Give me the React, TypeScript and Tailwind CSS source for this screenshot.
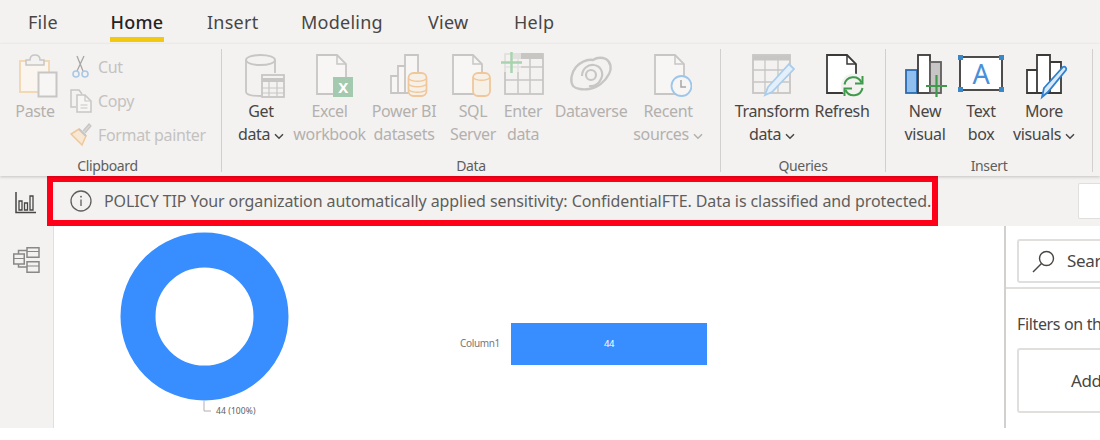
import type { ReactNode } from 'react'

const tabs = [
  { label: 'File', w: 'w-[110px]', pl: 'pl-[28px]' },
  { label: 'Home', w: 'w-[97px]', pl: 'pl-0' },
  { label: 'Insert', w: 'w-[94px]', pl: 'pl-0' },
  { label: 'Modeling', w: 'w-[127px]', pl: 'pl-0' },
  { label: 'View', w: 'w-[86px]', pl: 'pl-0' },
  { label: 'Help', w: 'w-[60px]', pl: 'pl-0' },
]

const Icon = ({ children }: { children: ReactNode }) => (
  <svg width="48" height="50" viewBox="0 0 48 50" fill="none" className="shrink-0">
    {children}
  </svg>
)

const Caret = () => (
  <svg width="10" height="7" viewBox="0 0 10 7" fill="none" className="ml-[4px] mt-[3px]">
    <path d="M1 1.2 5 5.2 9 1.2" stroke="currentColor" strokeWidth="1.5" />
  </svg>
)

function RibbonButton({ w, icon, lines, off, caret }: { w: string; icon: ReactNode; lines: string[]; off?: boolean; caret?: boolean }) {
  return (
    <div className={`${w} flex flex-col items-center shrink-0 ${off ? 'text-[#b3b0ad]' : 'text-[#484644]'}`}>
      {icon}
      {lines.map((line, i) => (
        <div key={i} className="h-[23px] leading-[23px] whitespace-nowrap flex items-center">
          {line}
          {caret && i === lines.length - 1 && <Caret />}
        </div>
      ))}
    </div>
  )
}

function Group({ w, label, labelPad, children }: { w: string; label: string; labelPad?: string; children: ReactNode }) {
  return (
    <div className={`${w} shrink-0 mt-[5px] h-[123px] border-r border-[#d2d0ce] flex flex-col pt-px`}>
      <div className="flex h-[108px] shrink-0">{children}</div>
      <div className={`${labelPad ?? ''} shrink-0 text-center text-[14px] leading-[16px] text-[#605e5c] whitespace-nowrap`}>{label}</div>
    </div>
  )
}

function SmallAction({ icon, label }: { icon: ReactNode; label: string }) {
  return (
    <div className="flex items-center h-[34px] text-[#c4c2c0]">
      <div className="w-[28px] shrink-0">{icon}</div>
      <span className="whitespace-nowrap">{label}</span>
    </div>
  )
}

const g = '#c8c6c4'

export default function App() {
  return (
    <div className="w-[1100px] h-[428px] overflow-hidden bg-[#f3f2f1] font-['Noto_Sans',sans-serif] text-[16px] tracking-[-0.35px] flex flex-col">
      {/* Tabs */}
      <div className="flex h-[44px] shrink-0 text-[18px] tracking-[0.25px] text-[#484644]">
        {tabs.map(t => (
          <div key={t.label} className={`${t.w} ${t.pl} h-full shrink-0 flex items-center`}>
            {t.label === 'Home' ? (
              <span className="relative h-full flex items-center text-[#252423] w-[54px] justify-center font-medium">
                Home
                <span className="absolute left-0 right-0 bottom-[2px] h-[5px] bg-[#f2c811]" />
              </span>
            ) : (
              t.label
            )}
          </div>
        ))}
      </div>

      {/* Ribbon */}
      <div className="flex h-[132px] shrink-0 shadow-[0_1px_3px_rgba(0,0,0,0.2)] relative">
        <Group w="w-[222px]" label="Clipboard" labelPad="pr-[6px]">
          <RibbonButton
            w="w-[70px]"
            off
            lines={['Paste']}
            icon={
              <Icon>
                <rect x="9" y="11" width="29" height="31" fill="#faf5ee" stroke="#f2d8b5" strokeWidth="2" />
                <path d="M15 15v-5h4c0-3 2-5 5-5s5 2 5 5h4v5z" fill="#f3f2f1" stroke={g} strokeWidth="1.500" />
                <rect x="27.500" y="22.500" width="18" height="24" fill="#f7f6f5" stroke={g} strokeWidth="2" />
              </Icon>
            }
          />
          <div className="flex flex-col">
            <SmallAction
              label="Cut"
              icon={
                <svg width="22" height="24" viewBox="0 0 22 24" fill="none">
                  <path d="M7 1l6 15M14 1 7 16" stroke="#a8a6a4" strokeWidth="1.300" />
                  <circle cx="6" cy="19" r="3" stroke="#a9c8e6" strokeWidth="1.600" />
                  <circle cx="15" cy="19" r="3" stroke="#a9c8e6" strokeWidth="1.600" />
                </svg>
              }
            />
            <SmallAction
              label="Copy"
              icon={
                <svg width="23" height="24" viewBox="0 0 23 24" fill="none" stroke={g} strokeWidth="1.500">
                  <path d="M6 18H1V1h8l3 4" />
                  <path d="M7 6h8l6 6v11H7z" fill="#f7f6f5" />
                  <path d="M15 6v6h6M10.500 16h7M10.500 19h7" strokeWidth="1.200" />
                </svg>
              }
            />
            <SmallAction
              label="Format painter"
              icon={
                <svg width="22" height="24" viewBox="0 0 22 24" fill="none">
                  <path d="M13 8l6-7 2 2-6 7" fill="#d9d7d5" stroke={g} strokeWidth="1.200" />
                  <path d="M9 6l7 7-4 9L1 11z" fill="#f8e7d2" stroke="#efc79a" strokeWidth="1.500" />
                  <path d="M9 6l7 7" stroke={g} strokeWidth="2" />
                </svg>
              }
            />
          </div>
        </Group>

        <Group w="w-[499px]" label="Data">
          <div className="w-[4px] shrink-0" />
          <RibbonButton
            w="w-[70px]"
            caret
            lines={['Get', 'data']}
            icon={
              <Icon>
                <ellipse cx="23.500" cy="10" rx="14.500" ry="5" stroke={g} strokeWidth="1.800" />
                <path d="M9 10v32c0 2 4 4 15 4" stroke={g} strokeWidth="1.800" />
                <path d="M38 10v13" stroke={g} strokeWidth="1.800" />
                <rect x="25" y="25" width="22" height="22" fill="#f3f2f1" stroke={g} strokeWidth="1.800" />
                <path d="M25 30h22" stroke={g} strokeWidth="4" />
                <path d="M25 38h22M25 43h22M32 30v17M40 30v17" stroke={g} strokeWidth="1.200" />
              </Icon>
            }
          />
          <RibbonButton
            w="w-[67px]"
            off
            lines={['Excel', 'workbook']}
            icon={
              <Icon>
                <path d="M11 5h20l9 9v30H11z" fill="#f7f6f5" stroke={g} strokeWidth="1.800" />
                <path d="M31 5v9h9" stroke={g} strokeWidth="1.500" />
                <rect x="27" y="27" width="20" height="20" fill="#a3c9ae" />
                <text x="37" y="43" textAnchor="middle" fontSize="15" fontWeight="700" fill="#fff" fontFamily="Noto Sans">X</text>
              </Icon>
            }
          />
          <RibbonButton
            w="w-[82px]"
            off
            lines={['Power BI', 'datasets']}
            icon={
              <Icon>
                <path d="M11 26h7v17h-7zM18 16h7v27h-7zM25 5h13v38H25z" fill="#f7f6f5" stroke={g} strokeWidth="1.800" />
                <rect x="28.500" y="23" width="18" height="23" rx="5" fill="#f7f0e6" stroke="#efc79a" strokeWidth="1.800" />
                <path d="M29 29c3 3 14 3 17 0M29 34.500c3 3 14 3 17 0M29 40c3 3 14 3 17 0" stroke="#efc79a" strokeWidth="1.500" />
              </Icon>
            }
          />
          <RibbonButton
            w="w-[56px]"
            off
            lines={['SQL', 'Server']}
            icon={
              <Icon>
                <path d="M4 5h20l9 9v30H4z" fill="#f7f6f5" stroke={g} strokeWidth="1.800" />
                <path d="M24 5v9h9" stroke={g} strokeWidth="1.500" />
                <rect x="24" y="23" width="17" height="23" rx="5" fill="#f7f0e6" stroke="#efc79a" strokeWidth="1.800" />
                <path d="M24.500 28c3 3 13 3 16 0" stroke="#efc79a" strokeWidth="1.500" />
              </Icon>
            }
          />
          <RibbonButton
            w="w-[44px]"
            off
            lines={['Enter', 'data']}
            icon={
              <Icon>
                <path d="M14 6h30" stroke={g} strokeWidth="6" />
                <rect x="6" y="4" width="38" height="40" stroke={g} strokeWidth="1.800" />
                <path d="M6 17h38M6 30h38M19 4v40M31 4v40" stroke={g} strokeWidth="1.500" />
                <rect x="0" y="0" width="22" height="22" fill="#f3f2f1" opacity="0.6" />
                <path d="M12.500 2v21M2 12.500h21" stroke="#a9d3ae" strokeWidth="2.500" />
              </Icon>
            }
          />
          <RibbonButton
            w="w-[92px]"
            off
            lines={['Dataverse']}
            icon={
              <Icon>
                <path d="M6 36c-3-5-2-13 3-19 5-5 11-8 17-7 3-2 8-3 13-1 5 3 6 10 3 15-4 8-12 14-20 15-6 1-13 0-16-3z" stroke={g} strokeWidth="2.400" />
                <path d="M15 26c0-7 6-12 12-11 7 1 10 8 7 14-2 5-7 8-12 7" stroke={g} strokeWidth="2.200" />
                <circle cx="24" cy="25" r="5" stroke={g} strokeWidth="2.200" />
              </Icon>
            }
          />
          <RibbonButton
            w="w-[62px]"
            off
            caret
            lines={['Recent', 'sources']}
            icon={
              <Icon>
                <path d="M11 5h20l9 9v30H11z" fill="#f7f6f5" stroke={g} strokeWidth="1.800" />
                <path d="M31 5v9h9" stroke={g} strokeWidth="1.500" />
                <circle cx="37.500" cy="36" r="10" fill="#f7f6f5" stroke="#9dc6ea" strokeWidth="1.800" />
                <path d="M37 30v7h5" stroke="#a8a6a4" strokeWidth="1.500" />
              </Icon>
            }
          />
        </Group>

        <Group w="w-[165px]" label="Queries">
          <RibbonButton
            w="w-[102px]"
            caret
            lines={['Transform', 'data']}
            icon={
              <Icon>
                <rect x="5" y="5" width="37" height="38" stroke={g} strokeWidth="1.800" />
                <path d="M5 8h37" stroke={g} strokeWidth="5" />
                <path d="M5 20h37M5 32h37M17 8v35M30 8v35" stroke={g} strokeWidth="1.300" />
                <path d="M20 37 41 14l5 5-22 23-7 3z" fill="#e4eff9" stroke="#a9cdec" strokeWidth="1.800" />
              </Icon>
            }
          />
          <RibbonButton
            w="w-[38px]"
            lines={['Refresh']}
            icon={
              <Icon>
                <path d="M9 5h20l9 9v29H9z" fill="#fff" stroke="#3b3a39" strokeWidth="1.800" />
                <path d="M29 5v9h9" stroke="#3b3a39" strokeWidth="1.500" />
                <circle cx="35.500" cy="36" r="12.500" fill="#f3f2f1" />
                <path d="M26.500 34.500A9 9 0 0 1 43.500 32.500M44.500 38A9 9 0 0 1 27.500 40" stroke="#3f9a4b" strokeWidth="2" />
                <path d="M44.500 26v7.500H37M26.500 46v-7.500H34" stroke="#3f9a4b" strokeWidth="2" />
              </Icon>
            }
          />
        </Group>

        <Group w="w-[207px]" label="Insert">
          <RibbonButton
            w="w-[78px]"
            lines={['New', 'visual']}
            icon={
              <Icon>
                <rect x="5" y="20" width="11" height="23" fill="#8fbfef" stroke="#2b6cb0" strokeWidth="1.800" />
                <rect x="17" y="5" width="12" height="38" fill="#fff" stroke="#3b3a39" strokeWidth="1.800" />
                <rect x="29" y="12" width="11" height="31" fill="#c8c6c4" stroke="#605e5c" strokeWidth="1.800" />
                <path d="M35.500 25v22M25 36h21" stroke="#3f9a4b" strokeWidth="2.200" />
              </Icon>
            }
          />
          <RibbonButton
            w="w-[34px]"
            lines={['Text', 'box']}
            icon={
              <Icon>
                <rect x="3" y="7" width="42" height="33" fill="#fff" stroke="#3b3a39" strokeWidth="1.800" />
                <path d="M1 5h5v5H1zM42 5h5v5h-5zM1 37h5v5H1zM42 37h5v5h-5z" fill="#3a87c8" />
                <text x="24" y="34" textAnchor="middle" fontSize="27" fill="#4a90d9" fontFamily="Noto Sans">A</text>
              </Icon>
            }
          />
          <RibbonButton
            w="w-[92px]"
            caret
            lines={['More', 'visuals']}
            icon={
              <Icon>
                <g transform="translate(6 0)">
                  <path d="M1 20h10v23H1zM11 5h13v38H11zM24 12h11v31H24z" fill="#fff" stroke="#3b3a39" strokeWidth="1.800" />
                  <path d="M18 38 37 17c2-1 4 1 3 3L22 42l-6 5z" fill="#dbeaf8" stroke="#2f80d0" strokeWidth="1.800" />
                </g>
              </Icon>
            }
          />
        </Group>
      </div>

      {/* Policy tip row */}
      <div className="flex h-[50px] shrink-0">
        <div className="w-[47px] shrink-0 flex pl-[15px] pt-[16px]">
          <svg width="21" height="22" viewBox="0 0 21 22" fill="none" stroke="#484644" strokeWidth="1.300">
            <path d="M1 0v20.500h20" strokeWidth="1.500" />
            <path d="M4 9h3v9H4zM9.500 11h3v7h-3zM15 4h3v14h-3z" />
          </svg>
        </div>
        <div className="w-[891px] h-[50px] shrink-0 border-[6px] border-[#ff0019] flex items-center pl-[17px] text-[#605e5c] tracking-[-0.09px] whitespace-nowrap">
          <svg width="22" height="22" viewBox="0 0 22 22" fill="none" className="shrink-0 mr-[12px]">
            <circle cx="11" cy="11" r="10" stroke="#605e5c" strokeWidth="1.300" />
            <path d="M11 9.500v6.500" stroke="#605e5c" strokeWidth="1.300" />
            <circle cx="11" cy="6.700" r="0.900" fill="#605e5c" />
          </svg>
          POLICY TIP Your organization automatically applied sensitivity: ConfidentialFTE. Data is classified and protected.
        </div>
        <div className="flex-1 flex justify-end items-center">
          <div className="w-[22px] h-[36px] bg-white border border-r-0 border-[#e1dfdd] rounded-l-[2px]" />
        </div>
      </div>

      {/* Main */}
      <div className="flex flex-1 min-h-0">
        <div className="w-[54px] shrink-0 border-r border-[#e1dfdd] pl-[13px] pt-[21px]">
          <svg width="27" height="26" viewBox="0 0 27 26" fill="none" stroke="#8a8886" strokeWidth="1.500">
            <path d="M5.500 7V3.500H14M5.500 17v3H14" />
            <path d="M.75 7h10.500v10H.75zM14 .75h12v9.500H14zM14 14.750h12v10.500H14z" />
            <path d="M.75 11.500h10.500M14 4.500h12M14 19h12" strokeWidth="1.200" />
          </svg>
        </div>
        <div className="w-[950px] shrink-0 bg-white">
          <svg width="950" height="202" viewBox="0 0 950 202" fill="none">
            <circle cx="150.500" cy="90.500" r="66.500" stroke="#388eff" strokeWidth="35" />
            <path d="M150 175v10h7" stroke="#b3b0ad" strokeWidth="1" />
            <text x="162" y="188" fontSize="8.500" letterSpacing="0.1" fill="#605e5c" fontFamily="Noto Sans">44 (100%)</text>
            <text x="406" y="121" fontSize="10" fill="#777" fontFamily="Noto Sans">Column1</text>
            <rect x="457" y="97" width="196" height="42" fill="#388eff" />
            <text x="555" y="121" fontSize="9.500" fill="#fff" textAnchor="middle" fontFamily="Noto Sans">44</text>
          </svg>
        </div>
        <div className="flex-1 min-w-0 border-l-2 border-[#d2d0ce] bg-white overflow-hidden text-[#484644]">
          <div className="h-[63px] border-b-2 border-[#e1dfdd] pl-[11px] pt-[13px]">
            <div className="w-[140px] h-[44px] border-2 border-[#e1dfdd] rounded-[3px] flex items-center pl-[13px]">
              <svg width="23" height="23" viewBox="0 0 23 23" fill="none" stroke="#484644" strokeWidth="1.400" className="shrink-0 mr-[12px]">
                <circle cx="14.500" cy="8.500" r="7" />
                <path d="M9.500 13.500 1 22" />
              </svg>
              <span className="text-[17px]">Search</span>
            </div>
          </div>
          <div className="pl-[11px] pt-[23px]">
            <div className="h-[24px] leading-[24px] whitespace-nowrap">Filters on this page</div>
            <div className="mt-[12px] w-[200px] h-[65px] border-2 border-[#e1dfdd] rounded-[3px] flex items-center pl-[52px] whitespace-nowrap text-[17px]">
              Add data fields here
            </div>
          </div>
        </div>
      </div>
    </div>
  )
}
